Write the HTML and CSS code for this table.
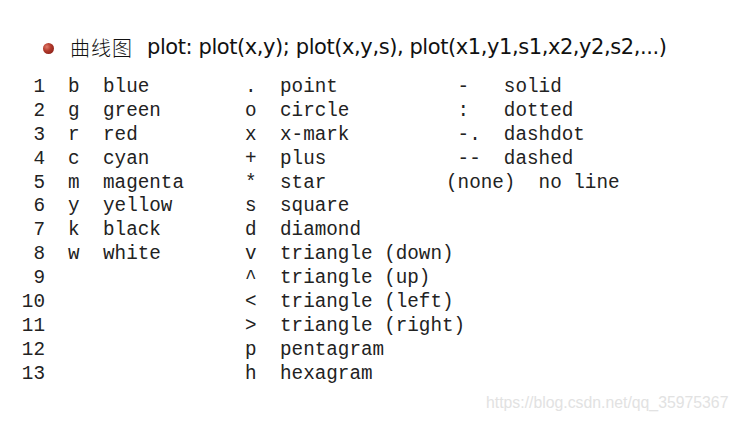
FILE: index.html
```html
<!DOCTYPE html>
<html>
<head>
<meta charset="utf-8">
<link rel="stylesheet" href="styles.css">
</head>
<body>
<div class="slide">
  <div class="title">
    <span class="ball"></span>
    <span class="cjk">曲线图</span>
    <span class="title-text">plot: plot(x,y); plot(x,y,s), plot(x1,y1,s1,x2,y2,s2,...)</span>
  </div>
  <div class="table">
    <span class="num">1</span><span class="c ltr">b</span><span class="c">blue</span><span class="c">.</span><span class="c">point</span><span class="c">&nbsp;-   solid</span>
    <span class="num">2</span><span class="c ltr">g</span><span class="c">green</span><span class="c">o</span><span class="c">circle</span><span class="c">&nbsp;:   dotted</span>
    <span class="num">3</span><span class="c ltr">r</span><span class="c">red</span><span class="c">x</span><span class="c">x-mark</span><span class="c">&nbsp;-.  dashdot</span>
    <span class="num">4</span><span class="c ltr">c</span><span class="c">cyan</span><span class="c">+</span><span class="c">plus</span><span class="c">&nbsp;--  dashed</span>
    <span class="num">5</span><span class="c ltr">m</span><span class="c">magenta</span><span class="c">*</span><span class="c">star</span><span class="c">(none)  no line</span>
    <span class="num">6</span><span class="c ltr">y</span><span class="c">yellow</span><span class="c">s</span><span class="c">square</span><span class="c"></span>
    <span class="num">7</span><span class="c ltr">k</span><span class="c">black</span><span class="c">d</span><span class="c">diamond</span><span class="c"></span>
    <span class="num">8</span><span class="c ltr">w</span><span class="c">white</span><span class="c">v</span><span class="c">triangle (down)</span><span class="c"></span>
    <span class="num">9</span><span class="c ltr"></span><span class="c"></span><span class="c">^</span><span class="c">triangle (up)</span><span class="c"></span>
    <span class="num">10</span><span class="c ltr"></span><span class="c"></span><span class="c">&lt;</span><span class="c">triangle (left)</span><span class="c"></span>
    <span class="num">11</span><span class="c ltr"></span><span class="c"></span><span class="c">&gt;</span><span class="c">triangle (right)</span><span class="c"></span>
    <span class="num">12</span><span class="c ltr"></span><span class="c"></span><span class="c">p</span><span class="c">pentagram</span><span class="c"></span>
    <span class="num">13</span><span class="c ltr"></span><span class="c"></span><span class="c">h</span><span class="c">hexagram</span><span class="c"></span>
  </div>
  <div class="watermark">https://blog.csdn.net/qq_35975367</div>
</div>
</body>
</html>
```
FILE: styles.css
```css
html, body {
  margin: 0;
  padding: 0;
  background: #ffffff;
}
.slide {
  position: relative;
  width: 738px;
  height: 422px;
  overflow: hidden;
}
.title {
  display: flex;
  align-items: center;
  padding: 32px 0 0 43px;
  height: 30px;
  color: #111;
}
.ball {
  width: 11px;
  height: 11px;
  border-radius: 50%;
  background: radial-gradient(circle at 35% 35%, #e07a6a 0%, #b23a2c 40%, #7a1510 100%);
  margin-right: 16px;
  margin-top: 2px;
}
.cjk {
  font-family: "Noto Sans CJK SC", sans-serif;
  font-size: 20px;
  font-weight: 300;
  letter-spacing: 1px;
  margin-right: 14px;
}
.title-text {
  font-family: "DejaVu Sans", sans-serif;
  font-size: 21px;
  letter-spacing: -0.42px;
}
.table {
  display: grid;
  grid-template-columns: 25px 58px 142px 35px 166px 200px;
  grid-auto-rows: 23.9px;
  margin: 14px 0 0 20px;
  font-family: "Liberation Mono", monospace;
  font-size: 19.3px;
  color: #222;
  line-height: 23.9px;
}
.num {
  text-align: right;
}
.c {
  white-space: pre;
}
.ltr {
  padding-left: 23px;
}
.watermark {
  position: absolute;
  left: 486px;
  top: 394px;
  font-family: "Liberation Sans", sans-serif;
  font-size: 15.8px;
  color: #e2e2e2;
}
```
